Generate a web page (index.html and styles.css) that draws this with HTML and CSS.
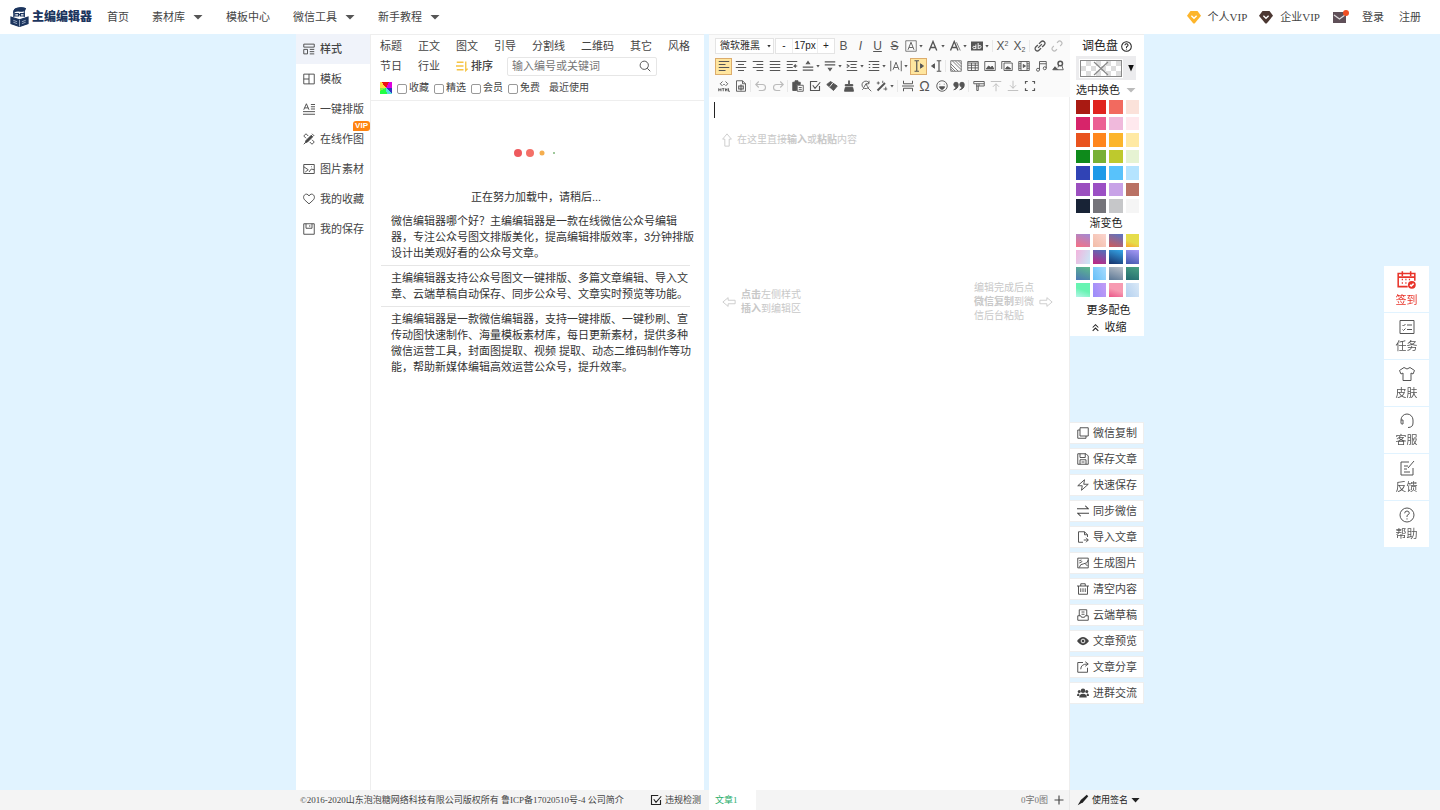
FILE: index.html
```html
<!DOCTYPE html>
<html lang="zh-CN">
<head>
<meta charset="utf-8">
<title>主编编辑器</title>
<link rel="stylesheet" href="styles.css">
</head>
<body>
<svg class="sprite" aria-hidden="true">
<symbol id="gem" viewBox="0 0 16 16"><path fill="currentColor" stroke="none" d="M4 1h8l4 5.500L9 15q-1 1-2 0L0 6.500z"/><path d="M5 6.500l3 3 3-3" stroke="#fff" stroke-width="1.500"/></symbol>
<symbol id="style" viewBox="0 0 16 16"><path d="M1 1.500h14v4H1zM1 8.500h5v6H1zM9 8.500h6M9 11.500h6M9 14.500h6"/></symbol>
<symbol id="layout" viewBox="0 0 16 16"><path d="M1 1.500h14v13H1zM8 1.500v13M1 8h7"/></symbol>
<symbol id="typeset" viewBox="0 0 16 16"><path d="M1 9l3.500-8L8 9M2.200 6.500h4.600M10.500 2H16M10.500 5H16M10.500 8H16M0 11.500h16M0 15h16"/></symbol>
<symbol id="draw" viewBox="0 0 16 16"><path d="M3 13l1-3 7-7 2 2-7 7z" fill="currentColor"/><path d="M1 4l3-3 3 3M9 12l3 3 3-3-3-3M1 4l3 3M1 15l2-2M12 1l3 3"/></symbol>
<symbol id="pic" viewBox="0 0 16 16"><path d="M1 2h14v12H1zM1 5l6 4-4 3M8 12l3-4 4 1M11 5h1"/></symbol>
<symbol id="gen" viewBox="0 0 16 16"><path d="M1 1.500h14v13H1zM3 5l3-1M3 8l4-2M3 14q1-5 6-5t6-5M11 9l3 3"/></symbol>
<symbol id="heart" viewBox="0 0 16 16"><path d="M8 14.500L2 9C-1 5 2 1.500 4.500 1.500Q7 1.500 8 4 9 1.500 11.500 1.500C14 1.500 17 5 14 9z"/></symbol>
<symbol id="save" viewBox="0 0 16 16"><path d="M1 1h14v14H1zM4 1v6h8V1M9 3v2"/></symbol>
<symbol id="sort" viewBox="0 0 16 16"><path d="M1 3h9M0 8h10M1 13h9M13 2v12l2.500-2.500" stroke-width="1.800"/></symbol>
<symbol id="search" viewBox="0 0 16 16"><circle cx="7" cy="7" r="5.500"/><path d="M11 11l4 4"/></symbol>
<symbol id="help" viewBox="0 0 16 16"><circle cx="8" cy="8" r="7"/><path d="M5.700 6.300Q5.800 4 8 4T10.300 6.200Q10.300 7.300 8 8.500V10M8 11.300v1.200"/></symbol>
<symbol id="up" viewBox="0 0 16 16"><path d="M8 1l5 6h-2.500v8h-5V7H3z"/></symbol>
<symbol id="left" viewBox="0 0 16 16"><path d="M1 8l6-5v3h8v4H7v3z"/></symbol>
<symbol id="right" viewBox="0 0 16 16"><path d="M15 8L9 3v3H1v4h8v3z"/></symbol>
<symbol id="textbox" viewBox="0 0 16 16"><path d="M1 1h14v14H1z" stroke-width="1"/><path d="M4 13l4-10 4 10M5.500 10h5"/></symbol>
<symbol id="color" viewBox="0 0 16 16"><path d="M3 14L8 2l5 12M5 10h6" stroke-width="1.800"/></symbol>
<symbol id="shadow" viewBox="0 0 16 16"><path d="M2 14L7 2l5 12M4 10h6" stroke-width="1.800"/><path d="M10 3l5 11" stroke-width="1"/></symbol>
<symbol id="mark" viewBox="0 0 16 16"><path d="M0 2h16v12H0z" fill="currentColor" stroke="none"/><path d="M6.500 6v6M6.500 9Q2 7 2.500 10t4 1M9.500 4v8M9.500 8q4-2 4 1t-4 2" stroke="#fff"/></symbol>
<symbol id="link" viewBox="0 0 16 16"><g transform="rotate(-45 8 8)"><path d="M7 5H3a3 3 0 0 0 0 6h4M9 5h4a3 3 0 0 1 0 6H9M4.500 8h7" stroke-width="1.700"/></g></symbol>
<symbol id="unlink" viewBox="0 0 16 16"><g transform="rotate(-45 8 8)"><path d="M5 5H3a3 3 0 0 0 0 6h2M11 5h2a3 3 0 0 1 0 6h-2" stroke-width="1.500"/></g></symbol>
<symbol id="al" viewBox="0 0 16 16"><path d="M1 2h14M1 6h9M1 10h14M1 14h9" stroke-width="1.600"/></symbol>
<symbol id="ac" viewBox="0 0 16 16"><path d="M1 2h14M4 6h8M1 10h14M4 14h8" stroke-width="1.600"/></symbol>
<symbol id="ar" viewBox="0 0 16 16"><path d="M1 2h14M6 6h9M1 10h14M6 14h9" stroke-width="1.600"/></symbol>
<symbol id="aj" viewBox="0 0 16 16"><path d="M1 2h14M1 6h14M1 10h14M1 14h14" stroke-width="1.600"/></symbol>
<symbol id="indent" viewBox="0 0 16 16"><path d="M1 2h14M1 6h8M1 10h8M1 14h14M15 8h-4l2-2M11 8l2 2" stroke-width="1.500"/></symbol>
<symbol id="top" viewBox="0 0 16 16"><path d="M1 9.500h14M1 13.500h14M6 5h4L8 2z" stroke-width="1.500"/></symbol>
<symbol id="bot" viewBox="0 0 16 16"><path d="M1 2.500h14M1 6.500h14M6 11h4l-2 3z" stroke-width="1.500"/></symbol>
<symbol id="lh" viewBox="0 0 16 16"><path d="M1 2h14M6 6h8M6 10h8M1 14h14M1 6l3 2-3 2" stroke-width="1.500"/></symbol>
<symbol id="list" viewBox="0 0 16 16"><path d="M1 2h14M1 6h2M6 6h9M1 10h2M6 10h9M1 14h14" stroke-width="1.500"/></symbol>
<symbol id="space" viewBox="0 0 16 16"><path d="M1 1v14M15 1v14M4 13l4-10 4 10M5.500 10h5"/></symbol>
<symbol id="ltr" viewBox="0 0 16 16"><path d="M2 1h6M2 15h6M5 1v14" stroke-width="1.600"/><path d="M10 5l4 3-4 3z" fill="currentColor"/></symbol>
<symbol id="rtl" viewBox="0 0 16 16"><path d="M9 1h6M9 15h6M12 1v14" stroke-width="1.600"/><path d="M6 5L2 8l4 3z" fill="currentColor"/></symbol>
<symbol id="hatch" viewBox="0 0 16 16"><path d="M1 1h14v14H1zM1 5l10 10M1 9l6 6M3 1l12 12M7 1l8 8M11 1l4 4M1 12l3 3" stroke-width="1"/></symbol>
<symbol id="table" viewBox="0 0 16 16"><path d="M1 2h14v12H1zM1 4h14M1 7h14M1 10.500h14M6 4v10M11 4v10"/></symbol>
<symbol id="image" viewBox="0 0 16 16"><path d="M1 2h14v12H1z"/><path d="M3 12l3-4 3 2 2-2 2 4z" fill="currentColor"/></symbol>
<symbol id="images" viewBox="0 0 16 16"><path d="M1 12V2h12M4 4h11v10H4z"/><path d="M6 12l2-3 3 1 2 2z" fill="currentColor"/></symbol>
<symbol id="video" viewBox="0 0 16 16"><path d="M1 2h14v12H1zM4 2v12M12 2v12M1 5h3M1 8h3M1 11h3M12 5h3M12 8h3M12 11h3"/><path d="M7 6l3 2-3 2z" fill="currentColor"/></symbol>
<symbol id="music" viewBox="0 0 16 16"><path d="M6 13V2h9v9M6 5h9"/><circle cx="4" cy="13" r="2"/><circle cx="13" cy="11" r="2"/></symbol>
<symbol id="map" viewBox="0 0 16 16"><circle cx="11" cy="4.500" r="3" stroke-width="2"/><path d="M9 7l-1 3M13 7l2 6H8"/><path d="M1 13l3-4 4 4z" fill="currentColor"/></symbol>
<symbol id="html" viewBox="0 0 16 16"><path d="M6 2L3 5l3 3M10 2l3 3-3 3M7 6h2M1 11v4M4 11v4M1 13h3M5.500 11.500h3M7 11.500V15M10 15v-3.500l1 2 1-2V15M14 11v4h2"/></symbol>
<symbol id="doc" viewBox="0 0 16 16"><path d="M2 1h8l4 4v10H2zM10 1v4h4"/><path d="M5 8h6v4H5zM8 6v8" stroke-width="1.500"/></symbol>
<symbol id="undo" viewBox="0 0 16 16"><path d="M5 2L1 6l4 4M1 6h9a4 4 0 0 1 0 8H5" stroke-width="1.500"/></symbol>
<symbol id="redo" viewBox="0 0 16 16"><path d="M11 2l4 4-4 4M15 6H6a4 4 0 0 0 0 8h5" stroke-width="1.500"/></symbol>
<symbol id="paste" viewBox="0 0 16 16"><path d="M1 3h10v3H6v8H1zM4 1h4v3H4z" fill="currentColor"/><path d="M7 7h8v8H7zM9 10h4M9 12.500h4"/></symbol>
<symbol id="check" viewBox="0 0 16 16"><path d="M14 8v6H2V2h9M5 7l3 4 7-8" stroke-width="1.500"/></symbol>
<symbol id="eraser" viewBox="0 0 16 16"><path d="M1 6l5-4 9 6-5 6z" fill="currentColor"/><path d="M5 9l4-5" stroke="#fff"/></symbol>
<symbol id="brush" viewBox="0 0 16 16"><path d="M7.500 1h1v5H13v2H3V6h4.500zM3 10h10l1 5H2z" fill="currentColor"/></symbol>
<symbol id="find" viewBox="0 0 16 16"><path d="M12 4a5 5 0 1 0 0 5M10 10l5 5M3 13l2-2M12 1v4H8M5 10l3-5 2 4"/></symbol>
<symbol id="wand" viewBox="0 0 16 16"><path d="M2 14L12 4" stroke-width="2.500"/><path d="M3 2v4M1 4h4M9 1v3M13 9v5M10 12h5"/></symbol>
<symbol id="break" viewBox="0 0 16 16"><path d="M2 1v4h12V1M2 15v-4h12v4M0 8h16" stroke-width="1.300"/></symbol>
<symbol id="smile" viewBox="0 0 16 16"><circle cx="8" cy="8" r="7"/><path d="M5 5v1M11 5v1M4.500 9h7q-1 3.500-3.500 3.500T4.500 9z" fill="currentColor"/></symbol>
<symbol id="quote" viewBox="0 0 16 16"><path d="M1 13q3-1 3-4A3 3 0 1 1 7 6q0 6-6 7zM9 13q3-1 3-4a3 3 0 1 1 3-3q0 6-6 7z" fill="currentColor"/></symbol>
<symbol id="format" viewBox="0 0 16 16"><path d="M1 2h14v6H8v-3H1zM4 8h4M5 5v9h2V8M8 5h7"/></symbol>
<symbol id="upload" viewBox="0 0 16 16"><path d="M1 2h14M8 15V5M4 9l4-4 4 4"/></symbol>
<symbol id="download" viewBox="0 0 16 16"><path d="M1 14h14M8 1v10M4 7l4 4 4-4"/></symbol>
<symbol id="full" viewBox="0 0 16 16"><path d="M2 5V2h3M11 2h3v3M14 11v3h-3M5 14H2v-3" stroke-width="1.600"/></symbol>
<symbol id="copy" viewBox="0 0 16 16"><path d="M4 1h11v11H4zM4 4H1v11h11v-3"/></symbol>
<symbol id="disk" viewBox="0 0 16 16"><path d="M1 1h11l3 3v11H1zM4 1v5h7V1M4 15V9h8v6M6 12h4"/></symbol>
<symbol id="bolt" viewBox="0 0 16 16"><path d="M10 1L1 9h6l-1 6 9-8H9z"/></symbol>
<symbol id="sync" viewBox="0 0 16 16"><path d="M0 5h15l-4-4M16 11H1l4 4" stroke-width="1.400"/></symbol>
<symbol id="import" viewBox="0 0 16 16"><path d="M14 8V5l-4-4H2v14h6M10 1v4h4M9 12h6M12 9l3 3-3 3"/></symbol>
<symbol id="trash" viewBox="0 0 16 16"><path d="M0 4h16M5 4V1h6v3M2 4v11h12V4M5 7v5M8 7v5M11 7v5"/></symbol>
<symbol id="cloud" viewBox="0 0 16 16"><path d="M3 9V1h10v8M6 4h4M6 7h4M1 9h4l1 2h4l1-2h4v6H1z"/></symbol>
<symbol id="eye" viewBox="0 0 16 16"><path d="M0 8q8-11 16 0-8 11-16 0z" fill="currentColor" stroke="none"/><circle cx="8" cy="8" r="2.500" stroke="#fff"/></symbol>
<symbol id="share" viewBox="0 0 16 16"><path d="M8 2H1v13h13V9M5 11q0-7 9-7M11 1l4 3-4 3"/></symbol>
<symbol id="group" viewBox="0 0 16 16"><g fill="currentColor" stroke="none"><circle cx="8" cy="5" r="3"/><circle cx="3" cy="6" r="2"/><circle cx="13" cy="6" r="2"/><path d="M3 14q0-5 5-5t5 5zM0 12q0-4 3-3l0 3zM16 12q0-4-3-3v3z"/></g></symbol>
<symbol id="cal" viewBox="0 0 16 16"><path d="M9 14H1V3h14v6M1 6h14M4.500 1v4M11.500 1v4M4 8h1M7 8h1M10 8h1M4 11h1M7 11h1"/><circle cx="12.500" cy="12.500" r="3.300" fill="currentColor" stroke="none"/><path d="M11 12.500l1 1 2-2" stroke="#fff"/></symbol>
<symbol id="task" viewBox="0 0 16 16"><path d="M1 1.500h14v13H1zM3.500 6l1 1 2-2M8 6h5M3.500 10.500l1 1 2-2M8 10.500h5"/></symbol>
<symbol id="shirt" viewBox="0 0 16 16"><path d="M5 1.500q3 3 6 0l4.500 3L14 8l-2-1v7.500H4V7L2 8 .5 4.500z"/></symbol>
<symbol id="headset" viewBox="0 0 16 16"><path d="M2 7a6 6 0 0 1 12 0M2 7h2v4H3q-1 0-1-1zM14 7v3q0 4.500-5 4.500"/></symbol>
<symbol id="note" viewBox="0 0 16 16"><path d="M10 2H2v13h12V8M5 6h4M5 9h3M5 12h6M9 8l6-7"/></symbol>
<symbol id="pen" viewBox="0 0 16 16"><path d="M1 15l4-7 8-7 2 2-7 8z" fill="currentColor" stroke="none"/></symbol>
<symbol id="fold" viewBox="0 0 16 16"><path d="M3 8l5-5 5 5M3 14l5-5 5 5" stroke-width="1.800"/></symbol>
</svg>

<header class="header">
  <a class="logo" href="#">
    <svg class="logo-mark" viewBox="0 0 20 20"><path d="M4 10V5q0-4 5-4.500 5-.5 7 .5l-1 3v6" fill="#fff" stroke="#1c355e"/><path d="M4 5Q4 1 9 .5q4-.5 7 .5-1 3-5 3Q7 3 4 5z" fill="#1c355e"/><path d="M5 6.500h4v2.500H5zM11 6.500h4v2.500h-4zM9 7.500h2" stroke="#1c355e"/><path d="M1 10l9 3 9-3v7l-9 3-9-3z" fill="#1c355e"/><path d="M10 13v7M3.500 13.500l4 1.500M3.500 15.500l4 1.500M16.500 13.500l-4 1.500M16.500 15.500l-4 1.500" stroke="#b9c6dc" stroke-width=".8"/></svg>
    <span>主编编辑器</span>
  </a>
  <nav class="nav">
    <a href="#">首页</a>
    <a href="#">素材库<i class="caret"></i></a>
    <a href="#">模板中心</a>
    <a href="#">微信工具<i class="caret"></i></a>
    <a href="#">新手教程<i class="caret"></i></a>
  </nav>
  <nav class="account">
    <a class="vip" href="#"><svg class="gold"><use href="#gem"/></svg>个人VIP</a>
    <a class="vip" href="#"><svg class="brown"><use href="#gem"/></svg>企业VIP</a>
    <a class="mail" href="#" aria-label="消息"><svg viewBox="0 0 18 14"><path d="M1 2h13v11H1z" fill="#5f4f58" stroke="none"/><path d="M2 5l5.500 4L13 5" stroke="#ddd"/><circle cx="14" cy="3" r="3" fill="#f04e23" stroke="none"/></svg></a>
    <a class="login" href="#">登录</a>
    <a href="#">注册</a>
  </nav>
</header>

<main class="work">
  <nav class="side">
    <a class="active" href="#"><svg><use href="#style"/></svg>样式</a>
    <a href="#"><svg><use href="#layout"/></svg>模板</a>
    <a href="#"><svg><use href="#typeset"/></svg>一键排版</a>
    <a href="#"><svg><use href="#draw"/></svg>在线作图<b class="badge">VIP</b></a>
    <a href="#"><svg><use href="#pic"/></svg>图片素材</a>
    <a href="#"><svg><use href="#heart"/></svg>我的收藏</a>
    <a href="#"><svg><use href="#save"/></svg>我的保存</a>
  </nav>

  <section class="library">
    <div class="filters">
      <div class="cats"><a href="#">标题</a><a href="#">正文</a><a href="#">图文</a><a href="#">引导</a><a href="#">分割线</a><a href="#">二维码</a><a href="#">其它</a><a href="#">风格</a></div>
      <div class="cats"><a href="#">节日</a><a href="#">行业</a><button class="sort"><svg><use href="#sort"/></svg>排序</button>
        <form class="search"><input type="text" placeholder="输入编号或关键词" aria-label="搜索"><button type="button" aria-label="搜索"><svg><use href="#search"/></svg></button></form>
      </div>
      <div class="checks">
        <button class="hue" aria-label="颜色"></button>
        <label><input type="checkbox">收藏</label>
        <label><input type="checkbox">精选</label>
        <label><input type="checkbox">会员</label>
        <label><input type="checkbox">免费</label>
        <a href="#">最近使用</a>
      </div>
    </div>
    <div class="loading">
      <svg class="dots" viewBox="0 0 48 12"><circle cx="6" cy="6" r="4" fill="#ee5a5e"/><circle cx="18" cy="6" r="4" fill="#f47068"/><circle cx="30" cy="6" r="2.500" fill="#f5ae4f"/><circle cx="42" cy="6" r="1" fill="#7fb67a"/></svg>
      <p>正在努力加载中，请稍后...</p>
    </div>
    <div class="about">
      <p>微信编辑器哪个好？主编编辑器是一款在线微信公众号编辑<br>器，专注公众号图文排版美化，提高编辑排版效率，3分钟排版<br>设计出美观好看的公众号文章。</p>
      <p>主编编辑器支持公众号图文一键排版、多篇文章编辑、导入文<br>章、云端草稿自动保存、同步公众号、文章实时预览等功能。</p>
      <p>主编编辑器是一款微信编辑器，支持一键排版、一键秒刷、宣<br>传动图快速制作、海量模板素材库，每日更新素材，提供多种<br>微信运营工具，封面图提取、视频 提取、动态二维码制作等功<br>能，帮助新媒体编辑高效运营公众号，提升效率。</p>
    </div>
  </section>

  <section class="editor">
    <div class="toolbar">
      <div class="row">
        <button class="font">微软雅黑<i class="tri"></i></button>
        <div class="stepper"><button>-</button><span>17px</span><button>+</button></div>
        <button class="t">B</button><button class="t"><em>I</em></button><button class="t"><u>U</u></button><button class="t"><s>S</s></button>
        <button class="t wide"><svg><use href="#textbox"/></svg><i class="tri"></i></button>
        <button class="t wide"><svg><use href="#color"/></svg><i class="tri"></i></button>
        <button class="t wide"><svg><use href="#shadow"/></svg><i class="tri"></i></button>
        <button class="t wide"><svg><use href="#mark"/></svg><i class="tri"></i></button>
        <i class="sep"></i>
        <button class="t">X<sup>2</sup></button><button class="t">X<sub>2</sub></button>
        <i class="sep"></i>
        <button class="t"><svg><use href="#link"/></svg></button><button class="t off"><svg><use href="#unlink"/></svg></button>
      </div>
      <div class="row">
        <button class="t on"><svg><use href="#al"/></svg></button><button class="t"><svg><use href="#ac"/></svg></button><button class="t"><svg><use href="#ar"/></svg></button><button class="t"><svg><use href="#aj"/></svg></button><button class="t"><svg><use href="#indent"/></svg></button>
        <button class="t wide"><svg><use href="#top"/></svg><i class="tri"></i></button>
        <button class="t wide"><svg><use href="#bot"/></svg><i class="tri"></i></button>
        <button class="t wide"><svg><use href="#lh"/></svg><i class="tri"></i></button>
        <button class="t wide"><svg><use href="#list"/></svg><i class="tri"></i></button>
        <button class="t wide"><svg><use href="#space"/></svg><i class="tri"></i></button>
        <button class="t on"><svg><use href="#ltr"/></svg></button><button class="t"><svg><use href="#rtl"/></svg></button>
        <i class="sep"></i>
        <button class="t"><svg><use href="#hatch"/></svg></button><button class="t"><svg><use href="#table"/></svg></button><button class="t"><svg><use href="#image"/></svg></button><button class="t"><svg><use href="#images"/></svg></button><button class="t"><svg><use href="#video"/></svg></button><button class="t"><svg><use href="#music"/></svg></button><button class="t"><svg><use href="#map"/></svg></button>
      </div>
      <div class="row">
        <button class="t"><svg><use href="#html"/></svg></button><button class="t"><svg><use href="#doc"/></svg></button>
        <i class="sep"></i>
        <button class="t off"><svg><use href="#undo"/></svg></button><button class="t off"><svg><use href="#redo"/></svg></button>
        <i class="sep"></i>
        <button class="t"><svg><use href="#paste"/></svg></button><button class="t"><svg><use href="#check"/></svg></button><button class="t"><svg><use href="#eraser"/></svg></button><button class="t"><svg><use href="#brush"/></svg></button><button class="t"><svg><use href="#find"/></svg></button>
        <button class="t wide"><svg><use href="#wand"/></svg><i class="tri"></i></button>
        <i class="sep"></i>
        <button class="t"><svg><use href="#break"/></svg></button><button class="t omega">Ω</button><button class="t"><svg><use href="#smile"/></svg></button><button class="t"><svg><use href="#quote"/></svg></button>
        <i class="sep"></i>
        <button class="t"><svg><use href="#format"/></svg></button><button class="t off"><svg><use href="#upload"/></svg></button><button class="t off"><svg><use href="#download"/></svg></button><button class="t"><svg><use href="#full"/></svg></button>
      </div>
    </div>
    <div class="canvas">
      <i class="cursor"></i>
      <p class="hint"><svg><use href="#up"/></svg><span>在这里直接<b>输入</b>或<b>粘贴</b>内容</span></p>
      <div class="hints">
        <p class="hint"><svg><use href="#left"/></svg><span><b>点击</b>左侧样式<br><b>插入</b>到编辑区</span></p>
        <p class="hint"><span>编辑完成后点<br><b>微信复制</b>到微<br>信后台粘贴</span><svg><use href="#right"/></svg></p>
      </div>
    </div>
  </section>

  <aside class="tools">
    <section class="palette">
      <h2>调色盘<svg><use href="#help"/></svg></h2>
      <button class="picker" aria-label="选择颜色"><svg class="checker" viewBox="0 0 40 15"><path d="M13 1l14 13M27 1L13 14" stroke="#888"/></svg><i class="drop"></i></button>
      <h3>选中换色<i class="caret"></i></h3>
      <div class="swatches">
        <i style="background:#a91a12"></i><i style="background:#e0241f"></i><i style="background:#f26a5f"></i><i style="background:#fbe2da"></i>
        <i style="background:#d7246a"></i><i style="background:#ec6094"></i><i style="background:#f0b9dc"></i><i style="background:#ffe9ee"></i>
        <i style="background:#e9531e"></i><i style="background:#ff861d"></i><i style="background:#fcb52a"></i><i style="background:#ffe9a3"></i>
        <i style="background:#0e8a1b"></i><i style="background:#79b035"></i><i style="background:#bec92d"></i><i style="background:#e6f3d3"></i>
        <i style="background:#3043b5"></i><i style="background:#1e9ae8"></i><i style="background:#58c2fb"></i><i style="background:#b5e4ff"></i>
        <i style="background:#9b4fbf"></i><i style="background:#9b4fc4"></i><i style="background:#c8a2e7"></i><i style="background:#b97164"></i>
        <i style="background:#182336"></i><i style="background:#75747a"></i><i style="background:#c6c7c9"></i><i style="background:#f5f5f5"></i>
      </div>
      <h3 class="mid">渐变色</h3>
      <div class="swatches">
        <i style="background:linear-gradient(20deg,#f77083,#a18bd5)"></i><i style="background:linear-gradient(45deg,#f2bca7,#fbd5cf)"></i><i style="background:linear-gradient(20deg,#d05a58,#5875c6)"></i><i style="background:linear-gradient(20deg,#fca62b,#e6dd4b 40%)"></i>
        <i style="background:linear-gradient(110deg,#f3b4dd,#c8e8f7)"></i><i style="background:linear-gradient(20deg,#c32482,#4d73bc)"></i><i style="background:linear-gradient(20deg,#17306a,#35a8ea)"></i><i style="background:linear-gradient(20deg,#4057ac,#a89af7)"></i>
        <i style="background:linear-gradient(20deg,#4c77b5,#5dbb8b)"></i><i style="background:linear-gradient(60deg,#66bff8,#a8dcff)"></i><i style="background:linear-gradient(20deg,#5b7795,#bcc2ca)"></i><i style="background:linear-gradient(20deg,#226a70,#4aa383)"></i>
        <i style="background:linear-gradient(20deg,#b5f5e8,#68f4b2 50%)"></i><i style="background:linear-gradient(70deg,#9a8cfa,#c39cf5)"></i><i style="background:linear-gradient(20deg,#ea5588,#f79ab2 50%)"></i><i style="background:linear-gradient(60deg,#b4d0ef,#dae9f7)"></i>
      </div>
      <button class="more">更多配色</button>
      <button class="more"><svg><use href="#fold"/></svg>收缩</button>
    </section>
    <div class="actions">
      <button><svg><use href="#copy"/></svg>微信复制</button>
      <button><svg><use href="#disk"/></svg>保存文章</button>
      <button><svg><use href="#bolt"/></svg>快速保存</button>
      <button><svg><use href="#sync"/></svg>同步微信</button>
      <button><svg><use href="#import"/></svg>导入文章</button>
      <button><svg><use href="#gen"/></svg>生成图片</button>
      <button><svg><use href="#trash"/></svg>清空内容</button>
      <button><svg><use href="#cloud"/></svg>云端草稿</button>
      <button><svg><use href="#eye"/></svg>文章预览</button>
      <button><svg><use href="#share"/></svg>文章分享</button>
      <button><svg><use href="#group"/></svg>进群交流</button>
    </div>
  </aside>
</main>

<footer class="footer">
  <div class="bar">
    <div class="legal"><span>©2016-2020山东泡泡糖网络科技有限公司版权所有 鲁ICP备17020510号-4 公司简介</span><a href="#"><svg><use href="#check"/></svg>违规检测</a></div>
    <div class="tabs"><button class="tab">文章1</button><span class="count">0字0图</span><button class="add" aria-label="新建文章"><svg viewBox="0 0 16 16"><path d="M8 2v12M2 8h12" stroke-width="1.500"/></svg></button></div>
    <button class="sign"><svg><use href="#pen"/></svg>使用签名<i class="caret"></i></button>
  </div>
</footer>

<aside class="float">
  <a class="hot" href="#"><svg><use href="#cal"/></svg>签到</a>
  <a href="#"><svg><use href="#task"/></svg>任务</a>
  <a href="#"><svg><use href="#shirt"/></svg>皮肤</a>
  <a href="#"><svg><use href="#headset"/></svg>客服</a>
  <a href="#"><svg><use href="#note"/></svg>反馈</a>
  <a href="#"><svg><use href="#help"/></svg>帮助</a>
</aside>
</body>
</html>
```
FILE: styles.css
```css
* { box-sizing: border-box; }
body {
  margin: 0;
  min-height: 100vh;
  display: flex;
  flex-direction: column;
  background: #e1f3ff;
  color: #444;
  font: 11px/16px "Liberation Sans", "Noto Sans CJK SC", sans-serif;
}
a { color: inherit; text-decoration: none; white-space: nowrap; }
button, input { margin: 0; padding: 0; border: 0; background: none; color: inherit; font: inherit; white-space: nowrap; }
p, h2, h3 { margin: 0; font-size: 11px; font-weight: 400; }
svg { flex: none; width: 12px; height: 12px; fill: none; stroke: currentColor; stroke-width: 1.2; }
i { flex: none; }
.sprite { position: absolute; width: 0; height: 0; }
.caret { width: 10px; height: 5px; background: currentColor; clip-path: polygon(0 0, 100% 0, 50% 100%); }
.tri { width: 4px; height: 3px; background: currentColor; clip-path: polygon(0 0, 100% 0, 50% 100%); }

.header {
  display: flex;
  align-items: center;
  height: 34px;
  padding: 0 19px 0 10px;
  background: #fff;
  font-family: "Liberation Serif", "Noto Sans CJK SC", serif;
}
.logo { display: flex; align-items: center; gap: 3px; color: #1c355e; font-size: 12px; font-weight: 900; }
.logo-mark { width: 19px; height: 20px; }
.nav { display: flex; gap: 23px; margin-left: 15px; }
.nav a { display: flex; align-items: center; gap: 8px; }
.nav .caret { background: #555; }
.account { display: flex; align-items: center; gap: 12px; margin-left: auto; }
.vip { display: flex; align-items: center; gap: 7px; }
.vip svg { width: 14px; height: 14px; }
.gold { color: #fdb52b; }
.brown { color: #4b3732; }
.mail { display: flex; }
.mail svg { width: 18px; height: 14px; }
.login { margin-right: 3px; }

.work, .bar {
  display: grid;
  width: 100%;
  max-width: 848px;
  margin: 0 auto;
}
.work { flex: 1; grid-template-columns: 75px minmax(0, 1fr) 366px 74px; }

.side { background: #fff; border-right: 1px solid #eee; }
.side a { position: relative; display: flex; align-items: center; gap: 5px; height: 30px; padding-left: 7px; }
.side .active { background: #f0f3fa; font-weight: 500; }
.badge {
  position: absolute;
  top: -3px;
  right: 0;
  padding: 0 2px;
  border-radius: 3px 3px 3px 0;
  background: #ff8410;
  color: #fff;
  font-size: 8px;
  line-height: 10px;
}

.library { background: #fff; border-top: 1px solid #eee; }
.filters { display: flex; flex-direction: column; padding: 1px 9px 0; border-bottom: 1px solid #eee; }
.cats { display: flex; align-items: center; gap: 16px; height: 20px; }
.sort { display: flex; align-items: center; gap: 3px; margin-right: -2px; font-weight: 500; }
.sort svg { color: #f6c443; }
.search { display: flex; align-items: center; flex: 0 1 150px; min-width: 0; height: 19px; padding: 0 5px 0 4px; border: 1px solid #e6e6e6; border-radius: 2px; }
.search input { flex: 1; min-width: 0; outline: 0; }
.search input::placeholder { color: #757575; opacity: 1; }
.search button { display: flex; }
.checks { display: flex; align-items: center; gap: 5px; height: 24px; font-size: 10px; }
.hue { width: 12px; height: 12px; background: conic-gradient(#e11 8%, #d0d 8% 24%, #33b 24% 36%, #5dd 36% 48%, #2f4 48% 68%, #8e4 68% 76%, #fd4 76% 90%, #e11 90%); }
.checks label { display: flex; align-items: center; gap: 2px; }
.checks input { appearance: none; width: 10px; height: 10px; margin-top: 2px; border: 1px solid #999; border-radius: 2px; background: #fff; }
.checks a { margin-left: 4px; }
.loading { display: flex; flex-direction: column; align-items: center; gap: 30px; padding: 46px 3px 0 0; color: #333; }
.dots { width: 48px; height: 12px; stroke: none; }
.about { padding: 4px 10px; color: #333; white-space: nowrap; }
.about p { padding: 4px 0 4px 10px; margin-right: 4px; }
.about p + p { border-top: 1px solid #e6e6e6; }

.editor { display: flex; flex-direction: column; margin-left: 5px; background: #fff; }
.toolbar { padding: 1px 4px 1px 6px; border-top: 1px solid #eee; background: #fafafa; }
.row { display: flex; align-items: center; height: 20px; }
.font, .stepper { display: flex; align-items: center; height: 16px; border: 1px solid #e4e4e4; background: #fff; font-size: 10px; line-height: 14px; }
.font { justify-content: space-between; width: 59px; padding: 0 2px 0 4px; color: #333; }
.stepper { width: 60px; margin: 0 0 0 1px; color: #222; }
.stepper button { width: 16px; }
.stepper span { flex: 1; border: solid #eee; border-width: 0 1px; text-align: center; }
.t { display: flex; align-items: center; justify-content: center; flex: none; width: 17px; height: 17px; font-size: 12px; color: #555; }
.wide { width: 22px; gap: 2px; }
.on { border: 1px solid #dcac6c; background: #ffe69f; }
.off { color: #bbb; }
.sep { width: 1px; height: 12px; margin: 0 1px; background: #e8e8e8; }
.omega { font-size: 14px; }
sup, sub { font-size: 7px; line-height: 8px; }
sup { align-self: flex-start; margin-top: 2px; }
sub { align-self: flex-end; margin-bottom: 1px; }
.canvas { flex: 1; padding: 5px 16px 0 5px; border-right: 1px solid #eee; }
.cursor { display: block; width: 1px; height: 16px; background: #222; }
.hint { display: flex; align-items: center; gap: 5px; color: #c8c8c8; font-size: 10px; line-height: 14px; white-space: nowrap; }
.canvas > .hint { gap: 3px; margin: 15px 0 0 6px; }
.hint svg { width: 14px; height: 14px; stroke-width: 1; }
.hints { display: flex; align-items: center; justify-content: space-between; margin: 134px 0 0 8px; }

.tools { display: flex; flex-direction: column; justify-content: space-between; }
.palette { display: flex; flex-direction: column; padding: 3px 8px 0 6px; border-top: 1px solid #eee; background: #fff; color: #222; }
.palette h2 { display: flex; align-items: center; gap: 3px; margin-left: 6px; font-size: 12px; }
.palette h2 svg { width: 11px; height: 11px; stroke-width: 1.5; }
.picker { display: flex; align-items: center; gap: 6px; height: 24px; margin: 2px 0 1px; padding-left: 4px; background: #ececee; }
.checker { width: 42px; height: 17px; border: 1px solid #888; outline: 1px solid #fff; background: conic-gradient(#ddd 25%, #fff 0 50%, #ddd 0 75%, #fff 0) 0 0 / 10px 10px; }
.drop { width: 6px; height: 7px; background: #111; clip-path: polygon(0 0, 100% 0, 50% 100%); }
.palette h3 { display: flex; align-items: center; gap: 6px; height: 18px; white-space: nowrap; }
.palette h3 .caret { background: #bbb; }
.palette .mid { justify-content: center; margin: 1px 0; }
.swatches { display: grid; grid-template-columns: repeat(4, minmax(0, 1fr)); gap: 3px; margin: 1px -3px 0 0; }
.swatches i { aspect-ratio: 1; }
.more { display: flex; align-items: center; justify-content: center; gap: 5px; height: 17px; margin-left: 5px; }
.swatches + .more { margin-top: 5px; }
.more svg { width: 9px; height: 9px; }
.actions { display: flex; flex-direction: column; gap: 4px; margin-bottom: 86px; }
.actions button { display: flex; align-items: center; gap: 4px; height: 22px; padding-left: 7px; border: 1px solid #eee; border-left: 0; background: #fff; }

.footer { background: #f4f4f4; font-family: "Liberation Serif", "Noto Sans CJK SC", serif; font-size: 9px; }
.bar { grid-template-columns: minmax(0, 1fr) 361px 74px; height: 20px; }
.legal { display: flex; align-items: center; justify-content: space-between; padding: 0 8px 0 4px; white-space: nowrap; }
.legal a { display: flex; align-items: center; gap: 3px; }
.legal svg { width: 12px; height: 12px; color: #222; }
.tabs { display: flex; align-items: stretch; border-right: 1px solid #e8e8e8; }
.tab { width: 47px; padding-left: 6px; background: #fff; color: #2bae6c; text-align: left; }
.count { align-self: center; margin-left: auto; color: #777; }
.add { display: flex; align-items: center; justify-content: center; width: 21px; }
.sign { display: flex; align-items: center; gap: 3px; padding-left: 7px; color: #222; }
.sign .caret { width: 9px; }

.float { position: fixed; top: 266px; right: 11px; display: flex; flex-direction: column; gap: 1px; }
.float a { display: flex; flex-direction: column; align-items: center; justify-content: center; gap: 3px; width: 45px; height: 46px; background: #fff; color: #555; }
.float svg { width: 16px; height: 16px; stroke-width: 1; }
.float .hot { color: #e8342a; }
.float .hot svg { width: 19px; height: 19px; stroke-width: 1.3; }
```
